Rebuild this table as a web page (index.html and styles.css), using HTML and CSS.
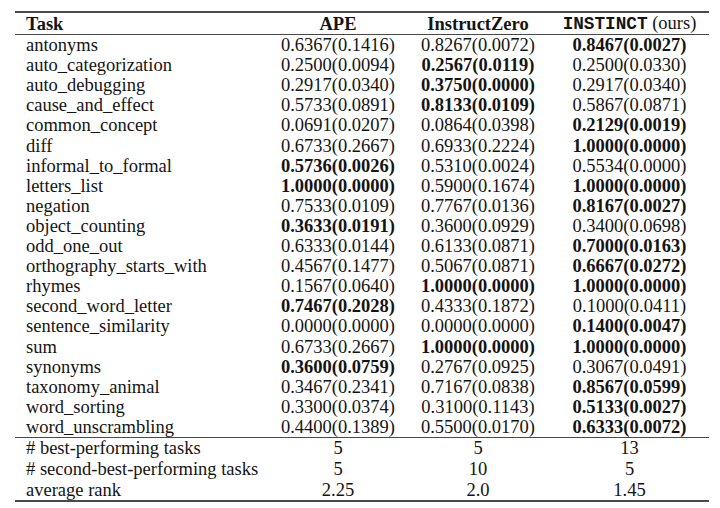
FILE: index.html
```html
<!DOCTYPE html>
<html>
<head>
<meta charset="utf-8">
<link rel="stylesheet" href="styles.css">
</head>
<body>
<table class="results">
  <colgroup>
    <col class="c-task"><col class="c-ape"><col class="c-iz"><col class="c-in">
  </colgroup>
  <thead>
    <tr>
      <th class="task">Task</th>
      <th>APE</th>
      <th>InstructZero</th>
      <th><span class="mono">INSTINCT</span> <span class="normal">(ours)</span></th>
    </tr>
  </thead>
  <tbody class="main">
    <tr class="first"><td class="task">antonyms</td><td>0.6367(0.1416)</td><td>0.8267(0.0072)</td><td><b>0.8467(0.0027)</b></td></tr>
    <tr><td class="task">auto_categorization</td><td>0.2500(0.0094)</td><td><b>0.2567(0.0119)</b></td><td>0.2500(0.0330)</td></tr>
    <tr><td class="task">auto_debugging</td><td>0.2917(0.0340)</td><td><b>0.3750(0.0000)</b></td><td>0.2917(0.0340)</td></tr>
    <tr><td class="task">cause_and_effect</td><td>0.5733(0.0891)</td><td><b>0.8133(0.0109)</b></td><td>0.5867(0.0871)</td></tr>
    <tr><td class="task">common_concept</td><td>0.0691(0.0207)</td><td>0.0864(0.0398)</td><td><b>0.2129(0.0019)</b></td></tr>
    <tr><td class="task">diff</td><td>0.6733(0.2667)</td><td>0.6933(0.2224)</td><td><b>1.0000(0.0000)</b></td></tr>
    <tr><td class="task">informal_to_formal</td><td><b>0.5736(0.0026)</b></td><td>0.5310(0.0024)</td><td>0.5534(0.0000)</td></tr>
    <tr><td class="task">letters_list</td><td><b>1.0000(0.0000)</b></td><td>0.5900(0.1674)</td><td><b>1.0000(0.0000)</b></td></tr>
    <tr><td class="task">negation</td><td>0.7533(0.0109)</td><td>0.7767(0.0136)</td><td><b>0.8167(0.0027)</b></td></tr>
    <tr><td class="task">object_counting</td><td><b>0.3633(0.0191)</b></td><td>0.3600(0.0929)</td><td>0.3400(0.0698)</td></tr>
    <tr><td class="task">odd_one_out</td><td>0.6333(0.0144)</td><td>0.6133(0.0871)</td><td><b>0.7000(0.0163)</b></td></tr>
    <tr><td class="task">orthography_starts_with</td><td>0.4567(0.1477)</td><td>0.5067(0.0871)</td><td><b>0.6667(0.0272)</b></td></tr>
    <tr><td class="task">rhymes</td><td>0.1567(0.0640)</td><td><b>1.0000(0.0000)</b></td><td><b>1.0000(0.0000)</b></td></tr>
    <tr><td class="task">second_word_letter</td><td><b>0.7467(0.2028)</b></td><td>0.4333(0.1872)</td><td>0.1000(0.0411)</td></tr>
    <tr><td class="task">sentence_similarity</td><td>0.0000(0.0000)</td><td>0.0000(0.0000)</td><td><b>0.1400(0.0047)</b></td></tr>
    <tr><td class="task">sum</td><td>0.6733(0.2667)</td><td><b>1.0000(0.0000)</b></td><td><b>1.0000(0.0000)</b></td></tr>
    <tr><td class="task">synonyms</td><td><b>0.3600(0.0759)</b></td><td>0.2767(0.0925)</td><td>0.3067(0.0491)</td></tr>
    <tr><td class="task">taxonomy_animal</td><td>0.3467(0.2341)</td><td>0.7167(0.0838)</td><td><b>0.8567(0.0599)</b></td></tr>
    <tr><td class="task">word_sorting</td><td>0.3300(0.0374)</td><td>0.3100(0.1143)</td><td><b>0.5133(0.0027)</b></td></tr>
    <tr class="last"><td class="task">word_unscrambling</td><td>0.4400(0.1389)</td><td>0.5500(0.0170)</td><td><b>0.6333(0.0072)</b></td></tr>
  </tbody>
  <tbody class="summary">
    <tr class="first"><td class="task"># best-performing tasks</td><td>5</td><td>5</td><td>13</td></tr>
    <tr><td class="task"># second-best-performing tasks</td><td>5</td><td>10</td><td>5</td></tr>
    <tr class="last"><td class="task">average rank</td><td>2.25</td><td>2.0</td><td>1.45</td></tr>
  </tbody>
</table>
</body>
</html>
```
FILE: styles.css
```css
html, body {
  margin: 0;
  padding: 0;
  background: #ffffff;
}
body {
  font-family: "Liberation Serif", "Times New Roman", serif;
  font-size: 18.5px;
  color: #141414;
}
.results {
  margin: 11px 0 0 15px;
  width: 694px;
  border-collapse: collapse;
  table-layout: fixed;
}
.c-task { width: 255px; }
.c-ape { width: 136px; }
.c-iz { width: 144px; }
.c-in { width: 159px; }
.results th,
.results td {
  padding: 0;
  height: 20.1px;
  line-height: 20.1px;
  text-align: center;
  white-space: nowrap;
  font-weight: normal;
}
.results th {
  font-weight: bold;
  border-top: 2px solid #4a4a4a;
  border-bottom: 1px solid #4a4a4a;
  height: 20px;
}
.results .task {
  text-align: left;
  padding-left: 11px;
}
.results b {
  font-weight: bold;
}
.mono {
  font-family: "Liberation Mono", "Courier New", monospace;
  font-weight: bold;
  font-size: 17.7px;
}
.normal {
  font-weight: normal;
}
.summary tr.first td {
  border-top: 1px solid #4a4a4a;
}
.summary tr.last td {
  border-bottom: 2px solid #4a4a4a;
}
.summary td {
  height: 20.8px;
}
```
